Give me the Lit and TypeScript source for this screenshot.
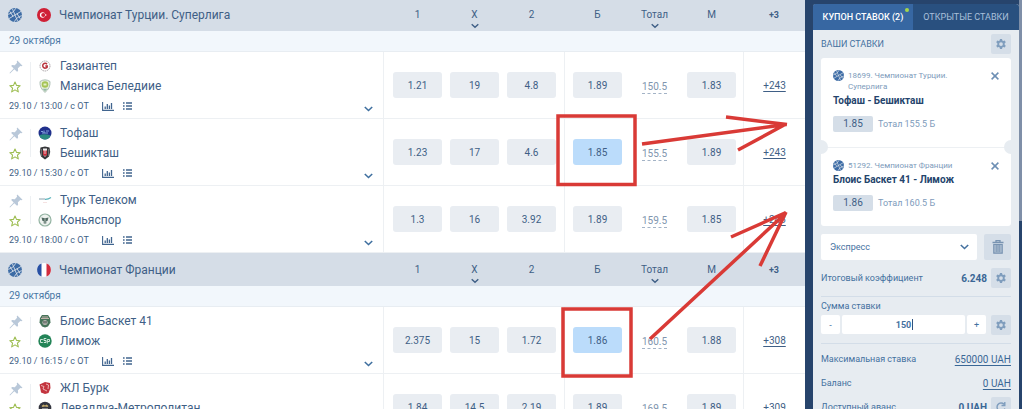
import { LitElement, html, css, svg } from "lit";
import { customElement } from "lit/decorators.js";

const ball = html`<svg class="ball" viewBox="0 0 14 14" aria-hidden="true">
  <circle cx="7" cy="7" r="7" fill="#3c6ba5" />
  <g fill="none" stroke="#d5dde7" stroke-width="0.9">
    <path d="M1 10.6 13 3.4M4.4 .8 9.6 13.2M.2 6.4C4 5 6.300 3.600 7.600 .2M13.800 7.600C10 9 7.700 10.400 6.400 13.800M1.600 3.200 5 8.300M12.400 10.800 9 5.700" />
  </g>
</svg>`;
const pin = html`<svg width="14" height="14" viewBox="0 0 14 14" fill="#b9c8d9" aria-hidden="true">
  <path d="M8.300.5 13.500 5.700 12.300 6.300 11.300 6 8.900 8.300 9.100 11 8 11.800 5.300 9.200 1 13.400.5 13 4.700 8.500 2.200 6 3 5 5.800 5.200 8.100 2.800 7.700 1.800Z" />
</svg>`;
const star = html`<svg width="12" height="12" viewBox="0 0 12 12" fill="none" stroke="#9dbd50" stroke-width="1.100" stroke-linejoin="round" aria-hidden="true">
  <path d="M6 1 7.500 4.400 11.200 4.700 8.400 7.200 9.300 10.900 6 8.900 2.700 10.900 3.600 7.200.8 4.700 4.500 4.400Z" />
</svg>`;
const chart = html`<svg width="12" height="9" viewBox="0 0 12 9" aria-hidden="true">
  <path d="M.6 0V8.400H12" fill="none" stroke="#41658f" stroke-width="1.100" />
  <path d="M3.200 7V4.500M5.300 7V2M7.400 7V3.500M9.500 7V1" stroke="#41658f" stroke-width="1.300" />
</svg>`;
const list = html`<svg width="9" height="8" viewBox="0 0 9 8" aria-hidden="true">
  <path d="M0 1H1.600M0 4H1.600M0 7H1.600M3 1H9M3 4H9M3 7H9" stroke="#41658f" stroke-width="1.300" />
</svg>`;
const chevron = (w: number) => html`<svg width=${w} height="6" viewBox="0 0 9 6" fill="none" stroke="currentColor" stroke-width="1.600" aria-hidden="true">
  <path d="M.8 1 4.500 4.500 8.200 1" />
</svg>`;
const gear = html`<svg width="10" height="10" viewBox="0 0 24 24" fill="#7f9dbd" aria-hidden="true">
  <path fill-rule="evenodd" d="M9.500 0h5l.7 3.500 2.300 1.300L21 3.700l2.500 4.300-2.700 2.400v3.200l2.700 2.400L21 20.300l-3.500-1.100-2.300 1.300-.7 3.500h-5l-.7-3.500-2.300-1.300L3 20.300.5 16l2.700-2.400v-3.200L.5 8 3 3.700l3.500 1.100 2.300-1.300ZM12 7.500a4.500 4.500 0 1 0 0 9 4.500 4.500 0 0 0 0-9Z" />
</svg>`;
const cross = html`<svg width="8" height="8" viewBox="0 0 8 8" stroke="#6d8fb4" stroke-width="1.500" aria-hidden="true"><path d="M.6.6 7.400 7.400M7.400.6.6 7.400" /></svg>`;

const logos: Record<string, unknown> = {
  gaz: svg`<circle cx="7" cy="7" r="5" fill="#fff" stroke="#a9a2a6" stroke-dasharray="1.500 .7"/><path d="M9 5.200A2.400 2.400 0 1 0 9.200 8V7H7.300" fill="none" stroke="#b8323c" stroke-width="1.500"/>`,
  man: svg`<path d="M2 2.500Q7-.8 12 2.500 12.600 9 7 13.400 1.400 9 2 2.500Z" fill="#e9f0dc" stroke="#9cb3a8" stroke-width=".8"/><circle cx="7" cy="5.500" r="3.300" fill="#a4c455"/><path d="M5.500 4.500h3v2h-3z" fill="#e5eecb"/><path d="M4.500 9.800h5L7 12.200Z" fill="#93b9a7"/>`,
  tof: svg`<circle cx="7" cy="7" r="6.500" fill="#20308c"/><path d="M1.200 9.500Q6 7 12.600 9.500 11 13.500 7 13.500 3 13.500 1.200 9.500Z" fill="#2b8a80"/><path d="M3 5.500h2M6 4.500v2.500M8 5h3M4 7h6" stroke="#81a3dc" stroke-width="1"/>`,
  bes: svg`<path d="M2.500 1.500 7 .5 11.500 1.500 12.200 6 11 10.500 7 13.500 3 10.500 1.800 6Z" fill="#343538"/><path d="M5 2.500h4v6L7 11 5 8.500Z" fill="#eee"/><path d="M5 4.500h4V8.500L7 10.500 5 8.500Z" fill="#c72d3b"/><path d="M6.300 3v5M7.700 3v5" stroke="#eee" stroke-width=".5"/><path d="M3.300 3v7M10.700 3v7" stroke="#aaa" stroke-width=".6"/>`,
  turk: svg`<path d="M1 6H7" stroke="#8ba1ad"/><path d="M7 6.300Q10 6.500 13 4.500" fill="none" stroke="#5bb4bc" stroke-width="1.200"/><path d="M5 9.500h4" stroke="#f0d5d5" stroke-width=".7"/>`,
  kon: svg`<circle cx="7" cy="7" r="6" fill="#eef2ef" stroke="#93b3a2" stroke-width="1.200"/><path d="M3.500 4.500 7 5.300 10.500 4.500 9.500 8H8.300V10.500H5.700V8H4.500Z" fill="#526a62"/><path d="M7 5.500V10" stroke="#e8eeea" stroke-width=".6"/>`,
  blo: svg`<path d="M2 4 4 1H10L12 4 12.500 8.500 10 12.500 7 13.500 4 12.500 1.500 8.500Z" fill="#47745a"/><path d="M3 4.500h8M4 3h6" stroke="#cfb9b4" stroke-width=".9"/><circle cx="7" cy="8.500" r="2.500" fill="#d7d5cf"/><path d="M5 8h4M6 6.500v4M8 6.500v4" stroke="#444e4a" stroke-width=".8"/>`,
  lim: svg`<circle cx="7" cy="7" r="6.700" fill="#238457"/><path d="M4.800 5.500H2.500V8.500H4.800M8.300 4.500H6V6.500H8V8.500H5.800M9.300 9.500V5.500H11.500V7.500H9.500" fill="none" stroke="#e2f1e7" stroke-width=".9"/>`,
  jl: svg`<path d="M1.500 3.500 7 1 12 2 12.500 7 10.500 12 7 13 3 11.500Z" fill="#c3343e"/><path d="M3 4.500 6 5.500 5 8 9 10M8 3 10.500 4 10 8" fill="none" stroke="#f0c3c3" stroke-width=".9"/>`,
  lev: svg`<circle cx="7" cy="7" r="6.300" fill="#33353f"/><path d="M3.500 5 5.500 3.500 7 4.500 8.500 3.500 10.500 5 9.500 6 7 5.500 4.500 6Z" fill="#c4ac6c"/><path d="M4 8h6" stroke="#ddd"/>`,
};
const logo = (k: string) => html`<svg class="logo" viewBox="0 0 14 14" aria-hidden="true">${logos[k]}</svg>`;

const turkey = html`<svg class="flag" viewBox="0 0 14 14" aria-hidden="true"><circle cx="7" cy="7" r="7" fill="#cf2036" /><circle cx="5.600" cy="7" r="2.700" fill="#fff" /><circle cx="6.300" cy="7" r="2.100" fill="#cf2036" /><circle cx="8.700" cy="7" r=".8" fill="#fff" /></svg>`;
const france = html`<svg class="flag" viewBox="0 0 14 14" aria-hidden="true"><circle cx="7" cy="7" r="7" fill="#fff" /><path d="M4.500.5A7 7 0 0 0 4.500 13.500Z" fill="#2850a4" /><path d="M9.500.5A7 7 0 0 1 9.500 13.500Z" fill="#d22c3d" /></svg>`;

interface Match { a: string; b: string; la: string; lb: string; time: string; o: string[]; more: string; pick?: boolean }
interface League { name: string; flag: unknown; matches: Match[] }

const leagues: League[] = [
  { name: "Чемпионат Турции. Суперлига", flag: turkey, matches: [
    { a: "Газиантеп", b: "Маниса Беледиие", la: "gaz", lb: "man", time: "29.10 / 13:00 / с ОТ", o: ["1.21", "19", "4.8", "1.89", "150.5", "1.83"], more: "+243" },
    { a: "Тофаш", b: "Бешикташ", la: "tof", lb: "bes", time: "29.10 / 15:30 / с ОТ", o: ["1.23", "17", "4.6", "1.85", "155.5", "1.89"], more: "+243", pick: true },
    { a: "Турк Телеком", b: "Коньяспор", la: "turk", lb: "kon", time: "29.10 / 18:00 / с ОТ", o: ["1.3", "16", "3.92", "1.89", "159.5", "1.85"], more: "+243" },
  ] },
  { name: "Чемпионат Франции", flag: france, matches: [
    { a: "Блоис Баскет 41", b: "Лимож", la: "blo", lb: "lim", time: "29.10 / 16:15 / с ОТ", o: ["2.375", "15", "1.72", "1.86", "160.5", "1.88"], more: "+308", pick: true },
    { a: "ЖЛ Бурк", b: "Леваллуа-Метрополитан", la: "jl", lb: "lev", time: "", o: ["1.84", "14.5", "2.19", "1.89", "169.5", "1.89"], more: "+309" },
  ] },
];

@customElement("odds-board")
class OddsBoard extends LitElement {
  static styles = css`
    :host { display: block; background: #fff; color: #3f5f86; }
    * { box-sizing: border-box; }
    svg { display: block; flex: none; }
    button { font: inherit; color: inherit; border: 0; padding: 0; background: none; }
    .board { margin-top: -2px; }
    .head, .match { display: grid; grid-template-columns: minmax(0, 1fr) 181px 179px 62px; }
    .head { height: 33px; background: #d5dde7; }
    .league { display: flex; align-items: center; padding-left: 8px; font-size: 12px; font-weight: 400; margin: 0; }
    .ball { width: 14px; height: 14px; }
    .flag { width: 14px; height: 14px; margin: 0 8px 0 15px; }
    .cols { display: grid; grid-template-columns: repeat(3, 49px); gap: 8px; padding-left: 10px; font-size: 10px; }
    .cols.two { padding-left: 9px; }
    .col { display: flex; flex-direction: column; align-items: center; padding-top: 10px; line-height: 14px; gap: 1px; }
    .plus { text-align: center; font-size: 9px; font-weight: 700; line-height: 34px; }
    .date { height: 21px; background: #f2f7fc; border-bottom: 1px solid #e8edf2; padding-left: 9px; font-size: 10px; line-height: 20px; color: #4a77a5; }
    .match { height: 67px; border-bottom: 1px solid #edf0f3; }
    .info { display: grid; grid-template-columns: 21px minmax(0, 1fr) 30px; padding: 4px 0 0 9px; align-content: start; }
    .marks { display: flex; flex-direction: column; gap: 7px; padding-top: 4px; }
    .marks button { display: flex; }
    .teams { display: grid; gap: 0; font-size: 12px; line-height: 20px; padding-left: 7px; }
    .sep { border-left: 1px solid #edf0f3; height: 28px; margin-top: 6px; }
    .mid { display: flex; }
    .team { display: flex; align-items: center; gap: 8px; white-space: nowrap; }
    .logo { width: 14px; height: 14px; }
    .when { grid-column: 1 / 3; display: flex; align-items: center; font-size: 9px; line-height: 20px; }
    .when .a { margin: 0 9px 0 13px; }
    .open { color: #3f6f9f; display: grid; place-items: end center; padding-bottom: 4px; }
    .odds { display: grid; grid-template-columns: repeat(3, 49px); gap: 8px; align-items: center; padding-left: 9px; border-left: 1px solid #edf0f3; font-size: 10px; }
    .odds.two { padding-left: 8px; }
    .odd { height: 26px; border-radius: 3px; background: #e9edf2; text-align: center; }
    .odd.on { background: #bbdcfb; }
    .total { justify-self: center; color: #8095ae; border-bottom: 1px dashed #a3b3c6; line-height: 13px; margin-top: 4px; }
    .more { border-left: 1px solid #edf0f3; display: grid; place-items: center; font-size: 10px; }
    a { color: inherit; text-underline-offset: 2px; }
  `;
  head(l: League) {
    return html`<div class="head">
      <h2 class="league">${ball}${l.flag}${l.name}</h2>
      <div class="cols"><span class="col">1</span><span class="col">X${chevron(8)}</span><span class="col">2</span></div>
      <div class="cols two"><span class="col">Б</span><span class="col">Тотал${chevron(8)}</span><span class="col">М</span></div>
      <div class="plus">+3</div>
    </div><div class="date">29 октября</div>`;
  }
  match(m: Match) {
    return html`<div class="match">
      <div class="info">
        <div class="marks"><button aria-label="Закрепить">${pin}</button><button aria-label="В избранное">${star}</button></div>
        <div class="mid"><span class="sep"></span><div class="teams"><div class="team">${logo(m.la)}${m.a}</div><div class="team">${logo(m.lb)}${m.b}</div></div></div>
        <span></span>
        <div class="when">${m.time}<span class="a">${chart}</span>${list}</div>
        <button class="open" aria-label="Развернуть">${chevron(9)}</button>
      </div>
      <div class="odds">${m.o.slice(0, 3).map((v) => html`<button class="odd">${v}</button>`)}</div>
      <div class="odds two"><button class="odd ${m.pick ? "on" : ""}">${m.o[3]}</button><span class="total">${m.o[4]}</span><button class="odd">${m.o[5]}</button></div>
      <div class="more"><a href="#">${m.more}</a></div>
    </div>`;
  }
  render() {
    return html`<div class="board">${leagues.map((l) => html`${this.head(l)}${l.matches.map((m) => this.match(m))}`)}</div>`;
  }
}

@customElement("bet-slip")
class BetSlip extends LitElement {
  static styles = css`
    :host { display: block; background: #e7ecf1; color: #44719f; font-size: 9px; border-radius: 3px 3px 0 0; }
    * { box-sizing: border-box; }
    svg { display: block; flex: none; }
    button, input, select { font: inherit; color: inherit; border: 0; padding: 0; margin: 0; background: none; }
    .tabs { display: grid; grid-template-columns: 100fr 106fr; height: 26px; color: #a9c0db; background: #29507f; }
    .tab { position: relative; white-space: nowrap; }
    .tab.on { background: #3767a2; color: #fff; font-weight: 500; }
    .dot { position: absolute; right: 4px; top: 4px; width: 4px; height: 4px; border-radius: 50%; background: #a5d64c; }
    .body { padding: 4px 8px 0; }
    .line { display: flex; align-items: center; justify-content: space-between; }
    .line.top { height: 20px; margin-bottom: 4px; }
    .sq { width: 20px; height: 20px; border-radius: 2px; background: #d5dee8; display: grid; place-items: center; }
    .card { background: #fff; border-radius: 3px; overflow: hidden; }
    .bet { padding: 12px 12px 15px; position: relative; }
    .bet + .bet { border-top: 1px solid #edf0f3; }
    .bet + .bet::before, .bet + .bet::after { content: ""; position: absolute; top: -8px; width: 14px; height: 14px; border-radius: 50%; background: #e7ecf1; }
    .bet + .bet::before { left: -7px; }
    .bet + .bet::after { right: -7px; }
    .meta { display: grid; grid-template-columns: 11px minmax(0, 1fr) 8px; gap: 4px; line-height: 11px; color: #7d9bbb; font-size: 8px; }
    .meta p { margin: 0; max-width: 120px; }
    .meta button { height: 11px; display: grid; place-items: center; }
    .ball { width: 11px; height: 11px; }
    .name { margin: 3px 0 9px; font-size: 10px; line-height: 12px; font-weight: 700; color: #24446c; }
    .val { display: flex; align-items: center; gap: 5px; color: #7d9bbb; }
    .k { width: 40px; height: 16px; line-height: 16px; border-radius: 2px; text-align: center; background: #d5dee8; color: #3f5f86; font-size: 10px; }
    .type { display: grid; grid-template-columns: minmax(0, 1fr) 27px; gap: 7px; margin-top: 8px; }
    .pick { display: grid; align-items: center; background: #fff; border-radius: 2px; height: 26px; }
    .pick > * { grid-area: 1 / 1; }
    .pick select { appearance: none; width: 100%; height: 26px; padding-left: 9px; }
    .pick svg { justify-self: end; margin-right: 8px; pointer-events: none; }
    .trash { width: 27px; height: 26px; }
    .coef { height: 20px; margin-top: 8px; }
    .coef b, .avail b { font-size: 10px; margin-left: auto; margin-right: 4px; color: #3a6796; }
    hr { border: 0; border-top: 1px solid #d3dde8; margin: 8px 0 0; }
    label { display: block; line-height: 18px; }
    .sum { display: grid; grid-template-columns: 19px minmax(0, 1fr) 19px 23px; column-gap: 2px; height: 20px; }
    .sum .st, .sum input { background: #fff; border-radius: 2px; height: 19px; width: 100%; min-width: 0; text-align: center; }
    .field { position: relative; }
    .field::after { content: ""; position: absolute; left: calc(50% + 8px); top: 4px; width: 1px; height: 11px; background: #2f5380; }
    .sum input { font-weight: 700; }
    .sum .sq { margin-left: 3px; }
    .amount, .avail { height: 24px; }
    .amount a { color: #3a6796; font-size: 10px; text-underline-offset: 2px; }
    .limits { padding-top: 3px; }
  `;
  bet(meta: string, name: string, k: string, total: string) {
    return html`<article class="bet">
      <div class="meta">${ball}<p>${meta}</p><button aria-label="Удалить">${cross}</button></div>
      <h3 class="name">${name}</h3>
      <div class="val"><span class="k">${k}</span>${total}</div>
    </article>`;
  }
  render() {
    return html`
      <div class="tabs"><button class="tab on">КУПОН СТАВОК (2)<span class="dot"></span></button><button class="tab">ОТКРЫТЫЕ СТАВКИ</button></div>
      <div class="body">
        <div class="line top">ВАШИ СТАВКИ<button class="sq" aria-label="Настройки">${gear}</button></div>
        <div class="card">
          ${this.bet("18699. Чемпионат Турции. Суперлига", "Тофаш - Бешикташ", "1.85", "Тотал 155.5 Б")}
          ${this.bet("51292. Чемпионат Франции", "Блоис Баскет 41 - Лимож", "1.86", "Тотал 160.5 Б")}
        </div>
        <div class="type">
          <div class="pick"><select aria-label="Тип ставки"><option>Экспресс</option></select>${chevron(9)}</div>
          <button class="sq trash" aria-label="Очистить"><svg width="12" height="14" viewBox="0 0 12 14" fill="none" stroke="#7893b1" aria-hidden="true"><path d="M.5 2.500H11.500M4 2V.7H8V2" stroke-width="1.300" /><path d="M1.800 4.500V13.200H10.200V4.500Z" fill="#b4c4d5" stroke-width="1.200" /><path d="M4.200 5V12M6 5V12M7.800 5V12" /></svg></button>
        </div>
        <div class="line coef">Итоговый коэффициент<b>6.248</b><button class="sq" aria-label="Настройки коэффициента">${gear}</button></div>
        <hr />
        <label for="sum">Сумма ставки</label>
        <div class="sum"><button class="st">-</button><div class="field"><input id="sum" value="150" inputmode="numeric" /></div><button class="st">+</button><button class="sq" aria-label="Настройки суммы">${gear}</button></div>
        <hr />
        <div class="limits">
          <div class="line amount">Максимальная ставка<a href="#">650000 UAH</a></div>
          <div class="line amount">Баланс<a href="#">0 UAH</a></div>
          <div class="line avail">Доступный аванс<b>0 UAH</b><button class="sq" aria-label="Обновить"><svg width="10" height="10" viewBox="0 0 10 10" fill="none" stroke="#7f9dbd" stroke-width="1.400" aria-hidden="true"><path d="M8.800 6.500A4 4 0 1 1 8 2.300M8.800 0V3.500H5.500" /></svg></button></div>
        </div>
      </div>`;
  }
}

@customElement("app-root")
class AppRoot extends LitElement {
  static styles = css`
    :host { display: block; height: 100vh; overflow: hidden; position: relative; box-sizing: border-box; padding: 0 2px 3px 0; background: #fff; font-family: Roboto, "Liberation Sans", sans-serif; }
    .page { display: grid; grid-template-columns: minmax(0, 1fr) 217px; height: 100%; overflow: hidden; background: #27446c; }
    .side { display: grid; grid-template-columns: minmax(0, 1fr) 3px; padding: 4px 0 0 8px; min-height: 0; }
    odds-board, bet-slip { min-height: 0; overflow: hidden; }
    .bar { background: #27446c; margin-top: -4px; }
    .thumb { height: 221px; background: #7f8fa8; }
    .notes { position: absolute; left: 0; top: 0; pointer-events: none; }
  `;
  render() {
    return html`
      <div class="page">
        <odds-board></odds-board>
        <div class="side"><bet-slip></bet-slip><div class="bar"><div class="thumb"></div></div></div>
      </div>
      <svg class="notes" width="1024" height="412" viewBox="0 0 1024 412" fill="none" stroke="#d93a36" stroke-width="3.500" aria-hidden="true">
        <rect x="558" y="116" width="77" height="68.500" />
        <rect x="563" y="309" width="68" height="67" />
        <path d="M642 144 786 124.500M726 117 787 124.500M785 124.500 738 150" />
        <path d="M650 339 786 213M731 237 786 212.500M786 212 760 266" />
      </svg>`;
  }
}
